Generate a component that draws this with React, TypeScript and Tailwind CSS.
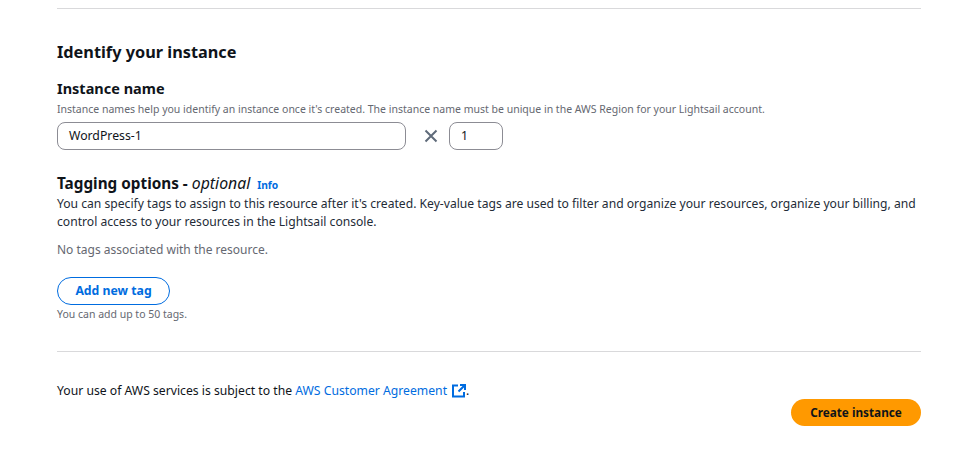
import React from "react";

export default function App() {
  return (
    <div className="w-[979px] h-[459px] overflow-hidden bg-white pl-[57px] pr-[58px] pt-2 font-['Noto_Sans',sans-serif] text-[#0f141a]">
      <div className="h-px bg-[#d9d9db]" />
      <h2 className="mt-[31px] text-[16.3px] leading-6 font-bold">Identify your instance</h2>
      <h3 className="mt-[14px] text-[14.5px] leading-5 font-bold">Instance name</h3>
      <p className="mt-[3px] text-[10.5px] leading-4 text-[#656871]">
        Instance names help you identify an instance once it's created. The instance name must be unique in the AWS Region for your Lightsail account.
      </p>
      <div className="mt-[5px] flex items-center">
        <div className="flex h-7 w-[349px] items-center rounded-lg border border-[#8c8c94] pl-[11px] text-[12.25px]">WordPress-1</div>
        <svg className="ml-[18px] mr-[11px]" width="14" height="14" viewBox="0 0 14 14" fill="none" stroke="#5f6b7a" strokeWidth="2">
          <path d="M1.5 1.5l11 11M12.5 1.5l-11 11" />
        </svg>
        <div className="flex h-7 w-[54px] items-center rounded-lg border border-[#8c8c94] pl-[11px] text-[12.25px]">1</div>
      </div>
      <div className="mt-[21px] flex items-baseline">
        <span className="text-[15.3px] leading-6 font-bold">Tagging options - </span>
        <span className="ml-1 text-[15.8px] leading-6 italic">optional</span>
        <span className="ml-[7px] text-[10.25px] font-bold text-[#006ce0]">Info</span>
      </div>
      <p className="text-[12.13px] leading-[18px] text-[#232b37]">
        You can specify tags to assign to this resource after it's created. Key-value tags are used to filter and organize your resources, organize your billing, and control access to your resources in the Lightsail console.
      </p>
      <p className="mt-[10px] text-[12px] leading-[18px] text-[#656871]">No tags associated with the resource.</p>
      <button className="mt-[18px] block h-7 w-[113px] rounded-full border border-[#006ce0] text-[12.25px] font-bold text-[#006ce0]">Add new tag</button>
      <p className="mt-[1px] text-[10.5px] leading-4 text-[#656871]">You can add up to 50 tags.</p>
      <div className="mt-[29px] h-px bg-[#d9d9db]" />
      <p className="mt-[31px] flex items-center text-[12.2px] leading-4">
        <span className="whitespace-pre">Your use of AWS services is subject to the </span>
        <span className="text-[#006ce0]">AWS Customer Agreement</span>
        <svg className="ml-[5px]" width="14" height="14" viewBox="0 0 14 14" fill="none" stroke="#006ce0" strokeWidth="2">
          <path d="M6 1.5H1v11h11V8" />
          <path d="M8 1h5v5M13 1L6.5 7.5" />
        </svg>
        <span>.</span>
      </p>
      <div className="flex justify-end">
        <button className="h-[27px] w-[130px] rounded-full bg-[#ff9900] text-[11.75px] font-bold text-[#0f141a]">Create instance</button>
      </div>
    </div>
  );
}
